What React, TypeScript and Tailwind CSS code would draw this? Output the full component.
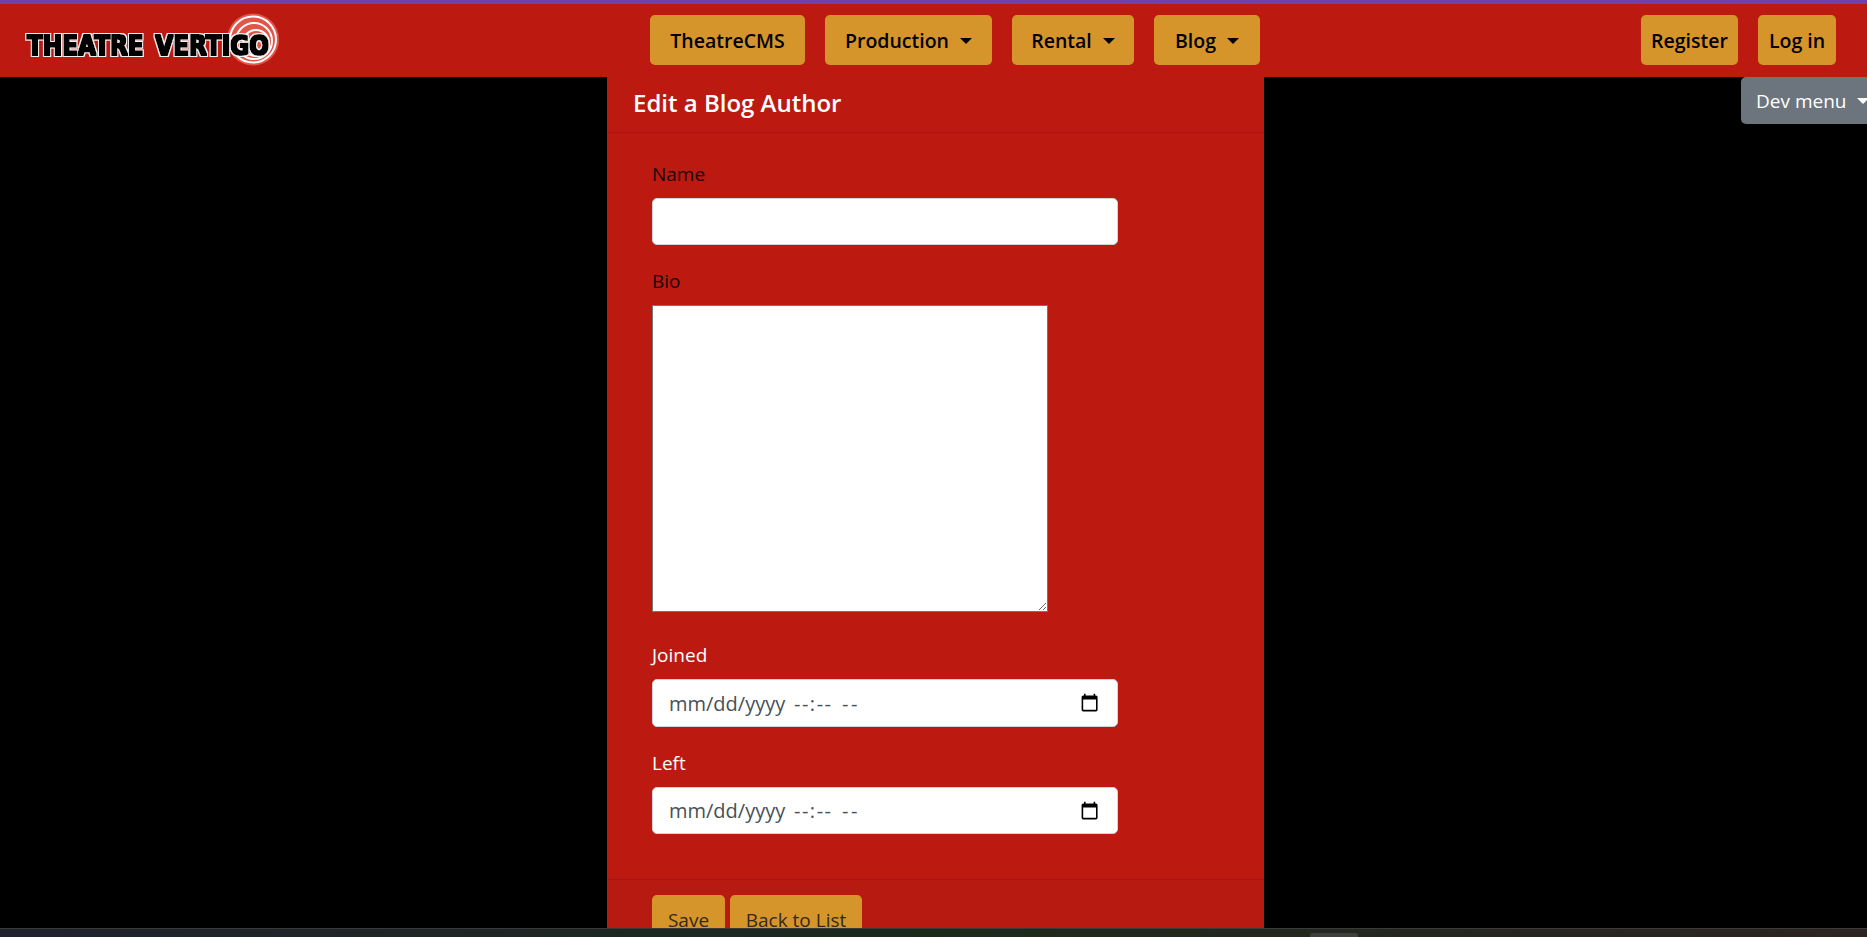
const font = { fontFamily: '"Open Sans", "Noto Sans", sans-serif' };

function Caret({ color = "border-t-black" }: { color?: string }) {
  return <span className={`ml-[11px] inline-block h-0 w-0 shrink-0 border-x-[6px] border-t-[6px] border-x-transparent ${color}`} />;
}

function NavButton({ label, caret, className }: { label: string; caret?: boolean; className: string }) {
  return (
    <a className={`flex h-[50px] items-center justify-center rounded-[5px] bg-[#d6952a] pt-[1px] text-[19.5px] font-semibold text-black ${className}`}>
      {label}
      {caret && <Caret />}
    </a>
  );
}

function Logo() {
  return (
    <svg width="290" height="73" viewBox="0 4 290 73" className="shrink-0">
      <defs>
        <filter id="logoText" x="-5%" y="-30%" width="110%" height="160%">
          <feMorphology in="SourceAlpha" operator="dilate" radius="0.7" result="fat" />
          <feMorphology in="SourceAlpha" operator="dilate" radius="2" result="halo" />
          <feFlood floodColor="#f4f4f4" />
          <feComposite in2="halo" operator="in" result="white" />
          <feFlood floodColor="#000" />
          <feComposite in2="fat" operator="in" result="black" />
          <feMerge>
            <feMergeNode in="white" />
            <feMergeNode in="black" />
          </feMerge>
        </filter>
      </defs>
      <circle cx="253" cy="39.5" r="26" fill="#e2564a" />
      <circle cx="253" cy="39.5" r="23" fill="none" stroke="#fff" strokeWidth="2" />
      <circle cx="254" cy="41" r="18" fill="none" stroke="#fff" strokeWidth="2" />
      <circle cx="256" cy="43" r="13" fill="none" stroke="#fff" strokeWidth="2" />
      <text
        x="27"
        y="54.5"
        textLength="242"
        lengthAdjust="spacingAndGlyphs"
        fontFamily='"DejaVu Sans", sans-serif'
        fontWeight="700"
        fontSize="27"
        fill="#000"
        filter="url(#logoText)"
        style={{ wordSpacing: "4px" }}
      >
        THEATRE VERTIGO
      </text>
    </svg>
  );
}

function Label({ children, dark }: { children: string; dark?: boolean }) {
  return <label className={`mb-[9px] block text-[19px] leading-[29px] ${dark ? "text-[#1a0505]" : "text-white"}`}>{children}</label>;
}

function CalendarIcon() {
  return (
    <svg width="19.2" height="19.2" viewBox="0 0 24 24" fill="#000" className="ml-auto shrink-0">
      <path d="M20 3h-1V1h-2v2H7V1H5v2H4c-1.1 0-2 .9-2 2v16c0 1.1.9 2 2 2h16c1.1 0 2-.9 2-2V5c0-1.1-.9-2-2-2zm0 18H4V8h16v13z" />
    </svg>
  );
}

function DateField({ label, className, height }: { label: string; className?: string; height: string }) {
  return (
    <div className={className}>
      <Label>{label}</Label>
      <div className={`flex w-[466px] items-center rounded-[5px] border border-[#ced4da] bg-white pl-[16px] pr-[17.5px] text-[20px] text-[#495057] ${height}`}>
        <span className="w-[125px] pt-[1px]">mm/dd/yyyy</span>
        <span className="w-[48px] pt-[1px] tracking-[1.5px]">--:--</span>
        <span className="pt-[1px] tracking-[2.5px]">--</span>
        <CalendarIcon />
      </div>
    </div>
  );
}

export default function App() {
  return (
    <div className="flex h-[937px] flex-col overflow-hidden bg-black" style={font}>
      <div className="h-[4px] shrink-0 bg-[#6f42a8]" />
      <nav className="flex h-[73px] shrink-0 items-center bg-[#bc1a11] pb-[1px]">
        <Logo />
        <div className="ml-[360px] flex gap-[20px]">
          <NavButton label="TheatreCMS" className="w-[155px]" />
          <NavButton label="Production" caret className="w-[167px]" />
          <NavButton label="Rental" caret className="w-[122px]" />
          <NavButton label="Blog" caret className="w-[106px]" />
        </div>
        <div className="ml-auto mr-[31px] flex gap-[20px]">
          <NavButton label="Register" className="w-[97px]" />
          <NavButton label="Log in" className="w-[78px]" />
        </div>
      </nav>
      <main className="relative flex min-h-0 flex-1 justify-center overflow-hidden pl-[4px]">
        <a className="absolute left-[1741px] top-0 flex h-[47px] w-[140px] items-center rounded-[5px] bg-[#6c757d] pl-[15px] pt-[1px] text-[19px] text-white">
          Dev menu
          <Caret color="border-t-white" />
        </a>
        <section className="w-[657px] bg-[#bc1a11]">
          <header className="flex h-[56px] items-center border-b border-[#a9170f] px-[26px] pb-[4px] text-[24px] font-semibold text-white">
            Edit a Blog Author
          </header>
          <div className="px-[45px] pt-[27px]">
            <Label dark>Name</Label>
            <input className="block h-[47px] w-[466px] rounded-[5px] border border-[#ced4da] bg-white" />
            <div className="mt-[22px]">
              <Label dark>Bio</Label>
              <textarea className="block h-[307px] w-[396px] border border-[#767676] bg-white" />
            </div>
            <DateField label="Joined" height="h-[48px]" className="mt-[29px]" />
            <DateField label="Left" height="h-[47px]" className="mt-[22px]" />
          </div>
          <footer className="mt-[45px] flex gap-[5px] border-t border-[#a9170f] bg-[#b71a10] px-[45px] pt-[15px] pb-[40px]">
            <a className="flex h-[47px] w-[73px] items-center justify-center rounded-[5px] bg-[#d6952a] pt-[3px] text-[19px] text-[#33291a]">Save</a>
            <a className="flex h-[47px] w-[132px] items-center justify-center rounded-[5px] bg-[#d6952a] pt-[3px] text-[19px] text-[#33291a]">Back to List</a>
          </footer>
        </section>
      </main>
      <div className="flex h-[9px] shrink-0 items-end border-t border-[#3a3a3a] bg-gradient-to-r from-[#20222e] via-[#1c2a1c] to-[#2c2420] pl-[1310px]">
        <div className="h-[4px] w-[48px] rounded-t-[3px] bg-[#3f3f3f]" />
      </div>
    </div>
  );
}
